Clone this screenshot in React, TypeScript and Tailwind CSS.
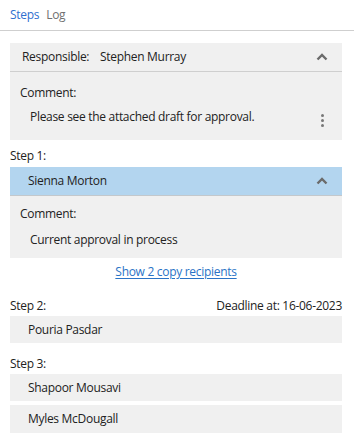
import React from "react";

const Chevron = () => (
  <svg width="12" height="8" viewBox="0 0 12 8" className="text-[#6b6b6b]">
    <path d="M1.5 6.5 L6 2 L10.5 6.5" fill="none" stroke="currentColor" strokeWidth="2.4" />
  </svg>
);

const Kebab = () => (
  <div className="flex flex-col gap-[2px] items-center relative top-[3px]">
    <span className="w-[3px] h-[3px] bg-[#777] rounded-full" />
    <span className="w-[3px] h-[3px] bg-[#777] rounded-full" />
    <span className="w-[3px] h-[3px] bg-[#777] rounded-full" />
  </div>
);

export default function App() {
  return (
    <div className="w-[354px] h-[447px] bg-white text-[12px] tracking-[-0.3px] text-[#222] font-['Segoe_UI','Open_Sans',sans-serif] leading-[12px]">
      <div className="h-[31px] flex items-center gap-[7px] px-[10px] border-b border-[#cfcfcf]">
        <span className="text-[#2f6fcf]">Steps</span>
        <span className="text-[#707070]">Log</span>
      </div>
      <div className="pl-[10px] pr-[12px] pt-[12px]">
        <div className="bg-[#f0f0f0]">
          <div className="h-[29px] flex items-center pl-[12px] pr-[14px] border-b border-[#cfcfcf]">
            <span className="w-[78px]">Responsible:</span>
            <span className="flex-1">Stephen Murray</span>
            <Chevron />
          </div>
          <div className="pl-[10px] pr-[18px] pt-[15px] pb-[17px]">
            <div>Comment:</div>
            <div className="flex items-center justify-between mt-[12px] h-[12px]">
              <span className="pl-[10px]">Please see the attached draft for approval.</span>
              <Kebab />
            </div>
          </div>
        </div>
        <div className="mt-[10px]">Step 1:</div>
        <div className="mt-[5px] bg-[#f0f0f0]">
          <div className="h-[29px] flex items-center pl-[18px] pr-[14px] bg-[#b3d5ef] border-b border-[#c3c8cc]">
            <span className="flex-1">Sienna Morton</span>
            <Chevron />
          </div>
          <div className="pl-[10px] pt-[12px] pb-[12px]">
            <div>Comment:</div>
            <div className="pl-[10px] mt-[14px]">Current approval in process</div>
          </div>
        </div>
        <div className="flex justify-center mt-[8px]">
          <span className="text-[#2a73c6] underline underline-offset-2">Show 2 copy recipients</span>
        </div>
        <div className="flex justify-between mt-[22px]">
          <span>Step 2:</span>
          <span>Deadline at: 16-06-2023</span>
        </div>
        <div className="mt-[4px] h-[27px] bg-[#f0f0f0] flex items-center pl-[18px]">Pouria Pasdar</div>
        <div className="mt-[15px]">Step 3:</div>
        <div className="mt-[4px] h-[27px] bg-[#f0f0f0] flex items-center pl-[18px]">Shapoor Mousavi</div>
        <div className="mt-[4px] h-[28px] bg-[#f0f0f0] flex items-center pl-[18px]">Myles McDougall</div>
      </div>
    </div>
  );
}
